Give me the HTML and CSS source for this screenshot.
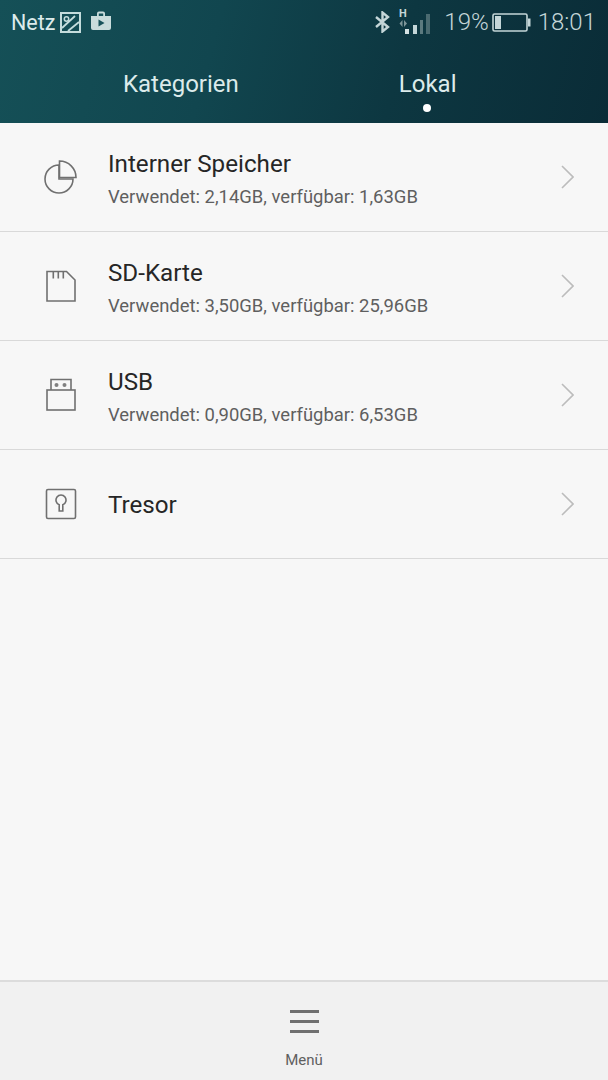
FILE: index.html
```html
<!DOCTYPE html>
<html>
<head>
  <meta charset="UTF-8">
  <title>Dateien</title>
  <meta name="viewport" content="width=device-width, initial-scale=1">
  <link rel="stylesheet" href="styles.css">
</head>
<body>
  <div class="app">
    <header class="top">
      <div class="status">
        <div class="status-left">
          <span class="netz">Netz</span>
          <svg class="ic-photo" width="21" height="21" viewBox="0 0 21 21" fill="none" stroke="#c4dcdc" stroke-width="2">
            <rect x="1" y="1" width="19" height="19"/>
            <circle cx="6.500" cy="7" r="2.200" stroke-width="1.500"/>
            <path d="M2 16 L15 4 M8 19 L19 10" stroke-width="1.800"/>
          </svg>
          <svg class="ic-store" width="20" height="19" viewBox="0 0 20 19">
            <path d="M0 5h6V2.500a2 2 0 0 1 2-2h4a2 2 0 0 1 2 2V5h6v12a2 2 0 0 1-2 2H2a2 2 0 0 1-2-2z" fill="#c9dcdc"/>
            <path d="M7.800 2.500h4.400V5H7.800z" fill="#17525a"/>
            <path d="M7.500 8.500l6 3.500-6 3.500z" fill="#17525a"/>
          </svg>
        </div>
        <div class="status-right">
          <svg class="ic-bt" width="17" height="22" viewBox="0 0 17 22" fill="none" stroke="#c4d6d8" stroke-width="2.400">
            <path d="M2 6l12 10-5.500 4.500V1.500L14 6 2 16"/>
          </svg>
          <svg class="ic-signal" width="32" height="26" viewBox="0 0 32 26">
            <text x="0" y="9" class="sig-h">H</text>
            <path d="M3.500 12l-3 3.500 3 3.500zM5 12l3 3.500-3 3.500z" fill="#7d9598"/>
            <rect x="6" y="21" width="4" height="5" fill="#d5e2e3"/>
            <rect x="14" y="17" width="4" height="9" fill="#c4d6d8"/>
            <rect x="21" y="12" width="3" height="14" fill="#5c7a7f"/>
            <rect x="27" y="6" width="4" height="20" fill="#4a6a70"/>
          </svg>
          <span class="pct">19%</span>
          <svg class="ic-batt" width="39" height="19" viewBox="0 0 39 19" fill="none">
            <rect x="1" y="1" width="34" height="17" rx="1.500" stroke="#c4d6d8" stroke-width="1.600"/>
            <rect x="3" y="3" width="6" height="13" fill="#c4d6d8"/>
            <rect x="36" y="5.500" width="2.500" height="8" fill="#c4d6d8"/>
          </svg>
          <span class="clock">18:01</span>
        </div>
      </div>
      <nav class="tabs">
        <div class="tab">Kategorien</div>
        <div class="tab tab-on">Lokal</div>
      </nav>
    </header>

    <main class="list">
      <div class="row">
        <svg class="row-ic" width="36" height="36" viewBox="0 0 36 36" fill="none" stroke="#707070" stroke-width="1.600">
          <path d="M16 6A14 14 0 1 0 30 20H16z"/>
          <path d="M16.500 2A16.500 16.500 0 0 1 33 18.500H16.500z" fill="#f7f7f7"/>
        </svg>
        <div class="row-txt">
          <div class="row-title">Interner Speicher</div>
          <div class="row-sub">Verwendet: 2,14GB, verfügbar: 1,63GB</div>
        </div>
        <svg class="chev" width="14" height="26" viewBox="0 0 14 26" fill="none" stroke="#bcbcbc" stroke-width="1.600"><path d="M2 2 L13 13 L2 24"/></svg>
      </div>
      <div class="row">
        <svg class="row-ic" width="36" height="36" viewBox="0 0 36 36" fill="none" stroke="#707070" stroke-width="1.600">
          <path d="M4 3.500h19.500l8.500 8.500v21H4z"/>
          <path d="M10.300 4v6.500M15.300 4v6.500M20.300 4v6.500"/>
        </svg>
        <div class="row-txt">
          <div class="row-title">SD-Karte</div>
          <div class="row-sub">Verwendet: 3,50GB, verfügbar: 25,96GB</div>
        </div>
        <svg class="chev" width="14" height="26" viewBox="0 0 14 26" fill="none" stroke="#bcbcbc" stroke-width="1.600"><path d="M2 2 L13 13 L2 24"/></svg>
      </div>
      <div class="row">
        <svg class="row-ic" width="36" height="36" viewBox="0 0 36 36" fill="none" stroke="#707070" stroke-width="1.600">
          <rect x="4" y="13" width="28" height="20"/>
          <path d="M8 13V2.500h20V13"/>
          <circle cx="13.500" cy="8" r="2" fill="#808080" stroke="none"/>
          <circle cx="21.500" cy="8" r="2" fill="#808080" stroke="none"/>
        </svg>
        <div class="row-txt">
          <div class="row-title">USB</div>
          <div class="row-sub">Verwendet: 0,90GB, verfügbar: 6,53GB</div>
        </div>
        <svg class="chev" width="14" height="26" viewBox="0 0 14 26" fill="none" stroke="#bcbcbc" stroke-width="1.600"><path d="M2 2 L13 13 L2 24"/></svg>
      </div>
      <div class="row">
        <svg class="row-ic" width="36" height="36" viewBox="0 0 36 36" fill="none" stroke="#707070" stroke-width="1.600">
          <rect x="3.500" y="3.500" width="29" height="29" rx="1.500"/>
          <path d="M16.200 18.700a5 5 0 1 1 3.600 0V25h-3.600z"/>
        </svg>
        <div class="row-txt">
          <div class="row-title">Tresor</div>
        </div>
        <svg class="chev" width="14" height="26" viewBox="0 0 14 26" fill="none" stroke="#bcbcbc" stroke-width="1.600"><path d="M2 2 L13 13 L2 24"/></svg>
      </div>
    </main>

    <footer class="bottom">
      <div class="burger"><span></span><span></span><span></span></div>
      <div class="menu-lbl">Menü</div>
    </footer>
  </div>
</body>
</html>
```
FILE: styles.css
```css
html, body {
  margin: 0;
  padding: 0;
}
body {
  font-family: Roboto, "Liberation Sans", sans-serif;
  background: #f7f7f7;
}
.app {
  width: 608px;
  height: 1080px;
  display: flex;
  flex-direction: column;
  overflow: hidden;
}
.top {
  height: 123px;
  background: linear-gradient(105deg, #155057 0%, #11464f 35%, #0d3741 65%, #0a2c37 100%);
  color: #dcebeb;
}
.status {
  height: 44px;
  display: flex;
  justify-content: space-between;
  align-items: center;
  padding: 0 12px 0 11px;
  color: #c4d6d8;
  font-size: 24px;
}
.status-left, .status-right {
  display: flex;
  align-items: center;
}
.netz {
  color: #dcebeb;
  font-size: 21.500px;
}
.ic-photo {
  margin-left: 5px;
}
.ic-store {
  margin-left: 10px;
  margin-bottom: 4px;
}
.ic-signal {
  margin-left: 8px;
  margin-bottom: 3px;
}
.sig-h {
  font-size: 11px;
  font-weight: 700;
  fill: #c4d6d8;
}
.pct {
  margin-left: 13px;
  font-weight: 300;
}
.ic-batt {
  margin-left: 3px;
}
.clock {
  margin-left: 7px;
  font-weight: 300;
}
.tabs {
  display: flex;
  padding-left: 123px;
  height: 79px;
}
.tab {
  position: relative;
  font-size: 24px;
  line-height: 28px;
  padding-top: 26px;
}
.tab-on {
  margin-left: 160px;
}
.tab-on::after {
  content: "";
  position: absolute;
  left: 50%;
  top: 60px;
  width: 8px;
  height: 8px;
  margin-left: -5px;
  border-radius: 50%;
  background: #fff;
}
.list {
  flex: 1;
}
.row {
  height: 108px;
  border-bottom: 1px solid #d9d9d9;
  display: flex;
  align-items: center;
  padding: 0 34px 0 43px;
}
.row-ic {
  flex: none;
}
.row-txt {
  flex: 1;
  margin-left: 29px;
  padding-top: 2px;
}
.row-title {
  font-size: 24.200px;
  line-height: 29px;
  color: #262626;
}
.row-sub {
  font-size: 18.450px;
  line-height: 24px;
  margin-top: 6px;
  margin-bottom: -2px;
  color: #5f5f5f;
}
.chev {
  flex: none;
}
.bottom {
  height: 100px;
  box-sizing: border-box;
  border-top: 2px solid #dcdcdc;
  background: #f1f1f1;
  display: flex;
  flex-direction: column;
  align-items: center;
  padding-top: 28px;
}
.burger {
  width: 29px;
  display: flex;
  flex-direction: column;
  gap: 7px;
}
.burger span {
  height: 3px;
  background: #707070;
}
.menu-lbl {
  margin-top: 17px;
  font-size: 15px;
  line-height: 20px;
  color: #5f5f5f;
}
```
